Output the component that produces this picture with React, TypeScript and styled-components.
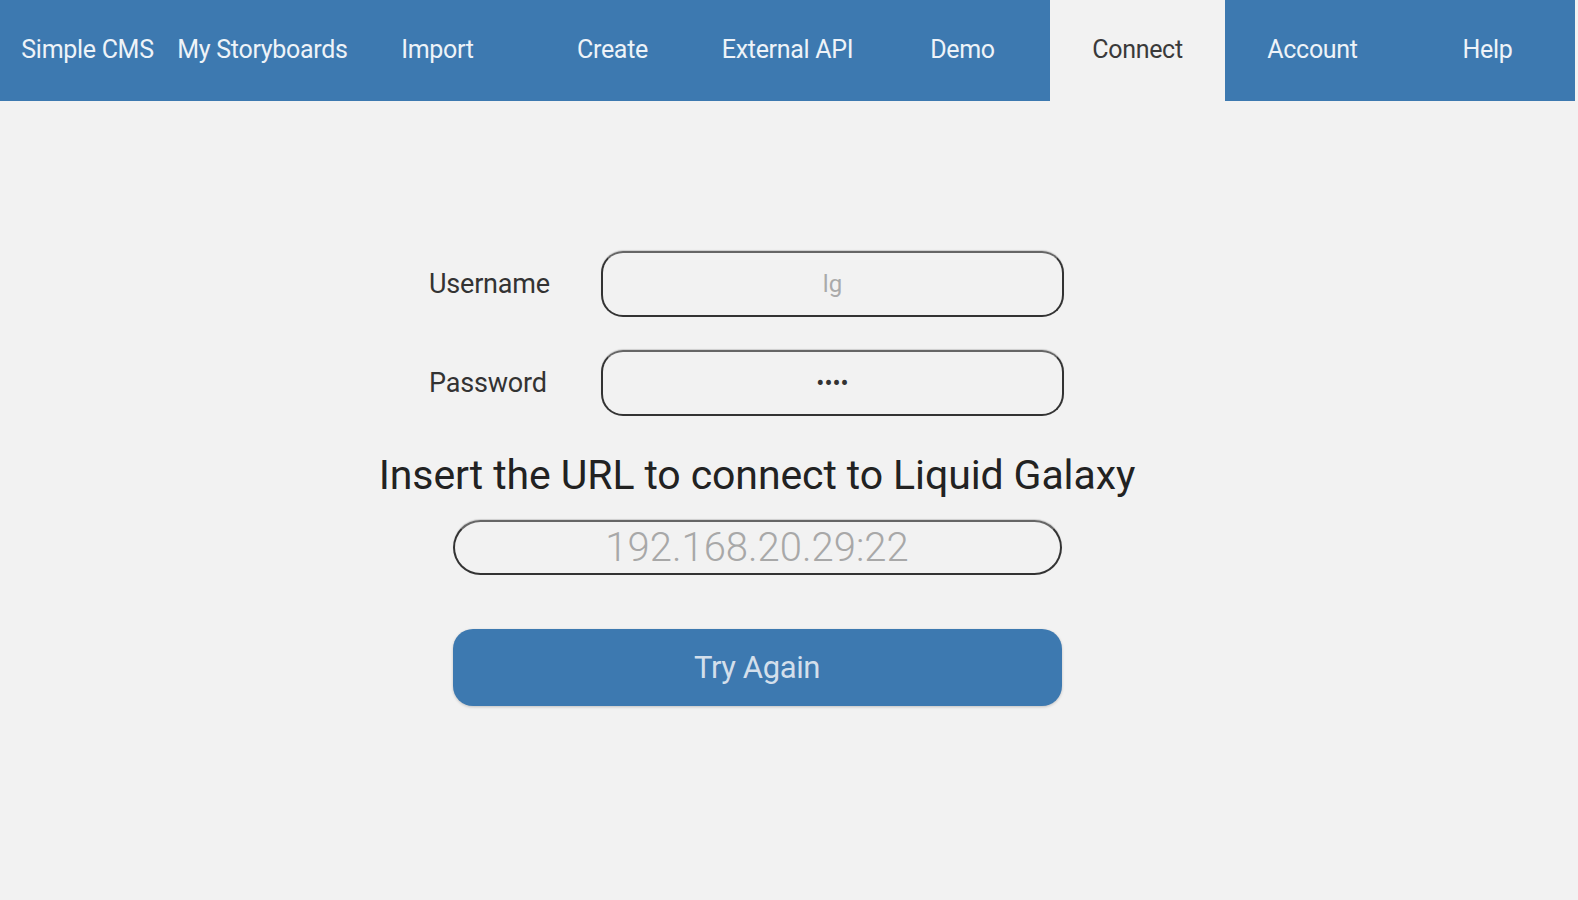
import React, { useState } from "react";
import styled, { createGlobalStyle } from "styled-components";

const GlobalStyle = createGlobalStyle`
  html, body {
    margin: 0;
    padding: 0;
    background: #f2f2f2;
    font-family: Roboto, "Liberation Sans", sans-serif;
  }
`;

const Page = styled.div`
  width: 1578px;
  height: 900px;
  background: #f2f2f2;
  overflow: hidden;
`;

const NavBar = styled.nav`
  display: flex;
  height: 101px;
  width: 1575px;
`;

const NavTab = styled.div<{ $active?: boolean }>`
  flex: 0 0 175px;
  display: flex;
  align-items: center;
  justify-content: center;
  font-size: 25px;
  letter-spacing: -0.3px;
  color: ${(p) => (p.$active ? "#3a3a3a" : "#eef3f8")};
  background: ${(p) => (p.$active ? "#f2f2f2" : "#3d79b0")};
  cursor: pointer;
  padding-bottom: 2px;
`;

const Main = styled.main`
  padding-top: 150px;
  padding-left: 377px;
`;

const Form = styled.div`
  width: 760px;
  display: flex;
  flex-direction: column;
  align-items: center;
`;

const FieldRow = styled.div`
  align-self: flex-start;
  display: grid;
  grid-template-columns: 172px 463px;
  align-items: center;
  margin-left: 52px;
  margin-bottom: 33px;
`;

const Label = styled.label`
  font-size: 27px;
  color: #333;
  letter-spacing: -0.2px;
`;

const Input = styled.input`
  box-sizing: border-box;
  height: 66px;
  width: 100%;
  border: 2px solid #333;
  border-top-color: #666;
  border-radius: 22px;
  background: transparent;
  text-align: center;
  font-family: Roboto, "Liberation Sans", sans-serif;
  font-size: 24px;
  color: #333;
  outline: none;
  box-shadow: 0 -1px 1px rgba(0, 0, 0, 0.15);
  &::placeholder {
    color: #aaa;
  }
`;

const Heading = styled.h2`
  margin: 3px 0 0;
  font-size: 41px;
  font-weight: 400;
  line-height: 46px;
  color: #222;
  letter-spacing: -0.1px;
  white-space: nowrap;
`;

const UrlInput = styled(Input)`
  width: 609px;
  height: 55px;
  margin-top: 22px;
  font-size: 40px;
  font-weight: 300;
  border-radius: 28px;
  &::placeholder {
    color: #a8a8a8;
  }
`;

const PrimaryButton = styled.button`
  width: 609px;
  height: 77px;
  margin-top: 54px;
  border: none;
  border-radius: 20px;
  background: #3d79b0;
  color: #d3dfeb;
  font-family: Roboto, "Liberation Sans", sans-serif;
  font-size: 31px;
  letter-spacing: -0.4px;
  box-shadow: 0 1px 3px rgba(0, 0, 0, 0.2);
  cursor: pointer;
`;

const tabs = [
  "Simple CMS",
  "My Storyboards",
  "Import",
  "Create",
  "External API",
  "Demo",
  "Connect",
  "Account",
  "Help",
];

const App: React.FC = () => {
  const [active, setActive] = useState("Connect");
  const [password, setPassword] = useState("lgpw");

  return (
    <>
      <GlobalStyle />
      <Page>
        <NavBar>
          {tabs.map((t) => (
            <NavTab key={t} $active={t === active} onClick={() => setActive(t)}>
              {t}
            </NavTab>
          ))}
        </NavBar>
        <Main>
          <Form>
            <FieldRow>
              <Label>Username</Label>
              <Input placeholder="lg" />
            </FieldRow>
            <FieldRow>
              <Label>Password</Label>
              <Input
                type="password"
                value={password}
                onChange={(e) => setPassword(e.target.value)}
              />
            </FieldRow>
            <Heading>Insert the URL to connect to Liquid Galaxy</Heading>
            <UrlInput placeholder="192.168.20.29:22" />
            <PrimaryButton>Try Again</PrimaryButton>
          </Form>
        </Main>
      </Page>
    </>
  );
};

export default App;
